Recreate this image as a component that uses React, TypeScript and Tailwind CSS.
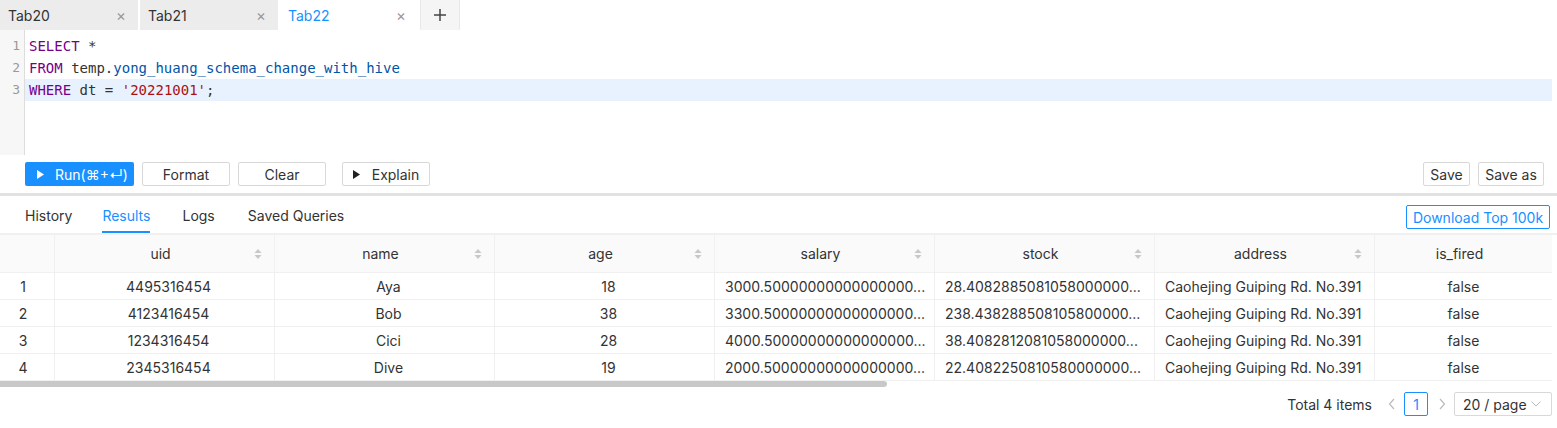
import React from 'react';

const cols = [
  { key: 'uid', w: 220, sort: true },
  { key: 'name', w: 220, sort: true },
  { key: 'age', w: 220, sort: true },
  { key: 'salary', w: 220, sort: true },
  { key: 'stock', w: 220, sort: true },
  { key: 'address', w: 220, sort: true },
  { key: 'is_fired', w: 177, sort: false },
];

const rows = [
  ['4495316454', 'Aya', '18', '3000.50000000000000000...', '28.4082885081058000000...', 'Caohejing Guiping Rd. No.391', 'false'],
  ['4123416454', 'Bob', '38', '3300.50000000000000000...', '238.438288508105800000...', 'Caohejing Guiping Rd. No.391', 'false'],
  ['1234316454', 'Cici', '28', '4000.50000000000000000...', '38.4082812081058000000...', 'Caohejing Guiping Rd. No.391', 'false'],
  ['2345316454', 'Dive', '19', '2000.50000000000000000...', '22.4082250810580000000...', 'Caohejing Guiping Rd. No.391', 'false'],
];

function SortIcon() {
  return (
    <svg width="8" height="12" viewBox="0 0 8 12" className="absolute right-[12px] top-1/2 -translate-y-1/2">
      <path d="M4 1 L7.5 5 H0.5 Z" fill="#c8c8c8" />
      <path d="M4 11 L7.5 7 H0.5 Z" fill="#c8c8c8" />
    </svg>
  );
}

function Tab({ label, active }: { label: string; active?: boolean }) {
  return (
    <div
      className={`flex items-center justify-between w-[138px] h-[30px] pl-[8px] pr-[12px] ${
        active ? 'bg-white text-[#1890ff]' : 'bg-[#ececec] text-[#333]'
      }`}
    >
      <span className="text-[14px]">{label}</span>
      <span className="text-[#999] text-[15px] leading-none">×</span>
    </div>
  );
}

function Btn({ children, w }: { children: React.ReactNode; w: string }) {
  return (
    <button className={`h-[24px] ${w} border border-[#d9d9d9] rounded-[2px] bg-white text-[14px] text-[#333] flex items-center justify-center`}>
      {children}
    </button>
  );
}

export default function App() {
  const mono = { fontFamily: '"DejaVu Sans Mono", monospace' };
  return (
    <div className="w-[1557px] h-[428px] bg-white overflow-hidden text-[#333]" style={{ fontFamily: 'Inter, "Liberation Sans", sans-serif' }}>
      {/* Tab bar */}
      <div className="flex h-[30px] bg-white gap-[2px]">
        <Tab label="Tab20" />
        <Tab label="Tab21" />
        <Tab label="Tab22" active />
        <div className="w-[40px] h-[30px] bg-[#f5f5f5] border-x border-[#e8e8e8] flex items-center justify-center">
          <svg width="14" height="14" viewBox="0 0 14 14">
            <path d="M7 1 V13 M1 7 H13" stroke="#444" strokeWidth="1.5" />
          </svg>
        </div>
      </div>

      {/* Editor */}
      <div className="flex h-[125px] w-[1552px]" style={mono}>
        <div className="w-[25px] bg-[#f7f7f7] border-r border-[#ddd] pt-[5px] text-[13px] text-[#999] text-right pr-[4px]">
          <div className="h-[22px] leading-[22px]">1</div>
          <div className="h-[22px] leading-[22px]">2</div>
          <div className="h-[22px] leading-[22px]">3</div>
        </div>
        <div className="flex-1 pt-[5px] text-[14px]">
          <div className="h-[22px] leading-[22px] pl-[4px]">
            <span className="text-[#708]">SELECT</span> *
          </div>
          <div className="h-[22px] leading-[22px] pl-[4px]">
            <span className="text-[#708]">FROM</span> temp.<span className="text-[#05a]">yong_huang_schema_change_with_hive</span>
          </div>
          <div className="h-[22px] leading-[22px] pl-[4px] bg-[#e8f2ff]">
            <span className="text-[#708]">WHERE</span> dt = <span className="text-[#a11]">'20221001'</span>;
          </div>
        </div>
      </div>

      {/* Toolbar */}
      <div className="flex items-center justify-between h-[38px] pl-[25px] pr-[13px]">
        <div className="flex items-center">
          <button className="h-[24px] w-[109px] bg-[#1890ff] rounded-[2px] text-white text-[14px] flex items-center pl-[12px] gap-[11px]">
            <svg width="7" height="9" viewBox="0 0 7 9"><path d="M0 0 L7 4.5 L0 9 Z" fill="white" /></svg>
            <span>Run(⌘+↵)</span>
          </button>
          <div className="ml-[8px]"><Btn w="w-[88px]">Format</Btn></div>
          <div className="ml-[8px]"><Btn w="w-[88px]">Clear</Btn></div>
          <div className="ml-[16px]">
            <Btn w="w-[88px] gap-[12px]">
              <svg width="7" height="9" viewBox="0 0 7 9"><path d="M0 0 L7 4.5 L0 9 Z" fill="#222" /></svg>
              <span>Explain</span>
            </Btn>
          </div>
        </div>
        <div className="flex items-center gap-[8px]">
          <Btn w="w-[47px]">Save</Btn>
          <Btn w="w-[66px]">Save as</Btn>
        </div>
      </div>
      <div className="h-[3px] bg-[#e2e2e2]" />

      {/* Result tabs */}
      <div className="flex items-end justify-between h-[39px] pl-[25px] pr-[7px] border-b-[2px] border-[#f0f0f0]">
        <div className="flex text-[14px]">
          <div className="h-[32px] leading-[30px] mr-[30px]">History</div>
          <div className="h-[32px] leading-[30px] mr-[32px] text-[#1890ff] border-b-[2px] border-[#1890ff]">Results</div>
          <div className="h-[32px] leading-[30px] mr-[33px]">Logs</div>
          <div className="h-[32px] leading-[30px]">Saved Queries</div>
        </div>
        <button className="mb-[4px] h-[24px] w-[144px] border border-[#1890ff] rounded-[2px] text-[#1890ff] text-[14px]">
          Download Top 100k
        </button>
      </div>

      {/* Table */}
      <div className="w-[1552px] text-[14px]">
        <div className="flex h-[38px] bg-[#fafafa] border-b border-[#f0f0f0]">
          <div className="w-[55px] border-r border-[#f0f0f0]" />
          {cols.map((c) => (
            <div
              key={c.key}
              className="relative flex items-center justify-center border-r border-[#f0f0f0] last:border-r-0 pr-[8px]"
              style={{ width: c.w }}
            >
              {c.key}
              {c.sort && <SortIcon />}
            </div>
          ))}
        </div>
        {rows.map((r, i) => (
          <div key={i} className="flex h-[27px] border-b border-[#f0f0f0]">
            <div className="w-[55px] flex items-center justify-center border-r border-[#f0f0f0] pr-[8px]">{i + 1}</div>
            {r.map((v, j) => (
              <div
                key={j}
                className={`flex items-center border-r border-[#f0f0f0] last:border-r-0 whitespace-nowrap overflow-hidden ${
                  j < 3 ? 'justify-center pl-[8px]' : j === 6 ? 'justify-center' : 'pl-[10px]'
                }`}
                style={{ width: cols[j].w }}
              >
                {v}
              </div>
            ))}
          </div>
        ))}
        <div className="h-[6px] w-[887px] bg-[#c8c8c8] rounded-r-[3px]" />
      </div>

      {/* Pagination */}
      <div className="flex items-center justify-end h-[34px] pr-[5px] text-[14px]">
        <span className="mr-[16px]">Total 4 items</span>
        <svg width="8" height="12" viewBox="0 0 8 12" className="mr-[8px]"><path d="M6 1 L1.5 6 L6 11" stroke="#bbb" strokeWidth="1.2" fill="none" /></svg>
        <div className="w-[24px] h-[24px] border border-[#1890ff] rounded-[2px] text-[#1890ff] flex items-center justify-center">1</div>
        <svg width="8" height="12" viewBox="0 0 8 12" className="ml-[10px] mr-[8px]"><path d="M2 1 L6.5 6 L2 11" stroke="#bbb" strokeWidth="1.2" fill="none" /></svg>
        <div className="w-[98px] h-[24px] border border-[#d9d9d9] rounded-[2px] flex items-center justify-between pl-[8px] pr-[10px]">
          <span>20 / page</span>
          <svg width="10" height="6" viewBox="0 0 10 6"><path d="M0.5 0.5 L5 5 L9.5 0.5" stroke="#bbb" strokeWidth="1" fill="none" /></svg>
        </div>
      </div>
    </div>
  );
}
